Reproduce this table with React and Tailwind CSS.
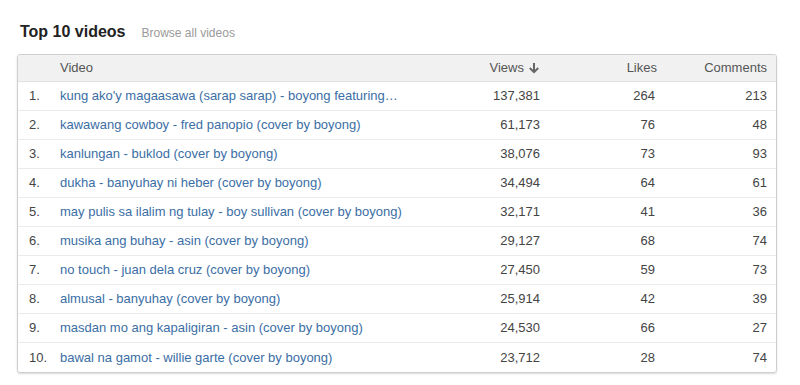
import React from "react";

const videos = [
  { title: "kung ako'y magaasawa (sarap sarap) - boyong featuring…", views: "137,381", likes: 264, comments: 213 },
  { title: "kawawang cowboy - fred panopio (cover by boyong)", views: "61,173", likes: 76, comments: 48 },
  { title: "kanlungan - buklod (cover by boyong)", views: "38,076", likes: 73, comments: 93 },
  { title: "dukha - banyuhay ni heber (cover by boyong)", views: "34,494", likes: 64, comments: 61 },
  { title: "may pulis sa ilalim ng tulay - boy sullivan (cover by boyong)", views: "32,171", likes: 41, comments: 36 },
  { title: "musika ang buhay - asin (cover by boyong)", views: "29,127", likes: 68, comments: 74 },
  { title: "no touch - juan dela cruz (cover by boyong)", views: "27,450", likes: 59, comments: 73 },
  { title: "almusal - banyuhay (cover by boyong)", views: "25,914", likes: 42, comments: 39 },
  { title: "masdan mo ang kapaligiran - asin (cover by boyong)", views: "24,530", likes: 66, comments: 27 },
  { title: "bawal na gamot - willie garte (cover by boyong)", views: "23,712", likes: 28, comments: 74 },
];

const cols = "grid grid-cols-[42px_359px_130px_117px_110px]";

const App = () => {
  return (
    <div className="w-[800px] h-[385px] bg-white font-['Liberation_Sans',Arial,sans-serif] pt-[20px] pl-[17px]">
      {/* Heading */}
      <div className="flex items-baseline pl-[3px] h-[20px]">
        <h2 className="text-[16px] font-bold text-[#222]">Top 10 videos</h2>
        <span className="ml-[16px] text-[12px] text-[#9a9a9a]">Browse all videos</span>
      </div>

      {/* Table */}
      <div className="mt-[14px] w-[760px] border border-[#cfcfcf] rounded-[3px] shadow-[0_1px_2px_rgba(0,0,0,0.15)] overflow-hidden text-[13px]">
        <div className={`${cols} h-[27px] items-center bg-[#f1f1f1] border-b border-[#e2e2e2] text-[#555]`}>
          <div></div>
          <div>Video</div>
          <div className="flex items-center justify-end gap-[4px] pr-[9px]">
            <span>Views</span>
            <svg width="12" height="12" viewBox="0 0 12 12" className="text-[#666]">
              <path d="M6 1 V10 M1.8 6 L6 10.2 L10.2 6" fill="none" stroke="currentColor" strokeWidth="2" />
            </svg>
          </div>
          <div className="text-right pr-[9px]">Likes</div>
          <div className="text-right pr-[9px]">Comments</div>
        </div>
        {videos.map((v, i) => (
          <div
            key={i}
            className={`${cols} h-[29px] items-center ${i < videos.length - 1 ? "border-b border-[#ebebeb]" : ""}`}
          >
            <div className="pl-[11px] text-[#444]">{i + 1}.</div>
            <div className="text-[#3b6ea5] whitespace-nowrap">{v.title}</div>
            <div className="text-right pr-[9px] text-[#444]">{v.views}</div>
            <div className="text-right pr-[11px] text-[#444]">{v.likes}</div>
            <div className="text-right pr-[9px] text-[#444]">{v.comments}</div>
          </div>
        ))}
      </div>
    </div>
  );
};

export default App;
